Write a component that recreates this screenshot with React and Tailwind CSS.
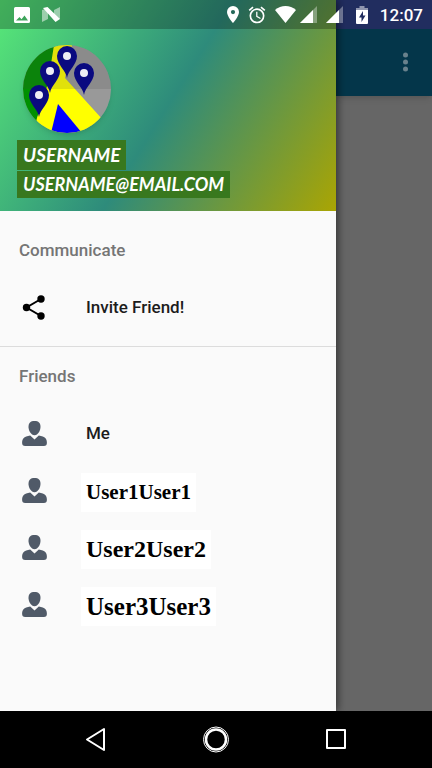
import React from 'react';

const friends = [
    { name: 'User1User1', size: 'text-[21px]' },
    { name: 'User2User2', size: 'text-[24px]' },
    { name: 'User3User3', size: 'text-[25px]' },
];

const pins = [
    { x: 44, y: 11 },
    { x: 27, y: 26 },
    { x: 61, y: 28 },
    { x: 16, y: 50 },
];

const PersonIcon = () => (
    <svg className="size-[25px] shrink-0" viewBox="0 0 25 25" fill="#505a68" aria-hidden="true">
        <path d="M12.500 0c4 0 6 2 6 5.800 0 4-2.600 8.400-6 8.400s-6-4.400-6-8.400C6.500 2 8.500 0 12.500 0z" />
        <path d="M8.200 14.500l4.300 4 4.300-4c3 .4 5.400 1.300 6.700 2.800 1 1.200 1.400 2.700 1.400 4.400 0 2.200-1 3.200-3 3.200H3.100c-2 0-3-1-3-3.200 0-1.700.4-3.200 1.400-4.400 1.300-1.500 3.700-2.400 6.700-2.800z" />
    </svg>
);

const ShareIcon = () => (
    <svg className="size-[25px] shrink-0" viewBox="0 0 25 25" aria-hidden="true">
        <path d="M19 4L4.500 12.500 19 21" fill="none" stroke="#000" strokeWidth="2" />
        <circle cx="19" cy="4" r="3.700" />
        <circle cx="4.500" cy="12.500" r="3.700" />
        <circle cx="19" cy="21" r="3.700" />
    </svg>
);

const Avatar = () => (
    <svg className="size-[88px] rounded-full shadow-md" viewBox="0 0 88 88" role="img" aria-label="Profile">
        <rect width="88" height="88" fill="#999999" />
        <path d="M0 0H32L25 40L14 74V88H0z" fill="#009000" />
        <path d="M31 0H49L42 33L80 75L70 88H10L14 73L25 38z" fill="#ffff00" />
        <path d="M35 59L28 88H59z" fill="#0000ff" />
        <rect width="88" height="44" fill="#444444" fillOpacity="0.160" />
        {pins.map((pin) => (
            <g key={pin.x} transform={`translate(${pin.x} ${pin.y})`}>
                <path d="M0 22C-1 14-10 9-10 0a10 10 0 0 1 20 0C10 9 1 14 0 22z" fill="#0a0a80" />
                <circle r="4" fill="#ededf5" />
            </g>
        ))}
    </svg>
);

const SignalIcon = () => (
    <svg className="h-[17px] w-[18px]" viewBox="0 0 18 17" fill="#fff" aria-hidden="true">
        <path d="M17 0v17H0z" fillOpacity="0.350" />
        <path d="M13 4v13H0z" />
    </svg>
);

const StatusBar = () => (
    <div className="absolute inset-x-0 top-0 z-20 flex h-[29px] items-center justify-between bg-black/25 pr-[9px] pl-[14px] text-white">
        <div className="flex items-center gap-3">
            <svg className="size-4" viewBox="0 0 16 16" fill="#fff" aria-hidden="true">
                <path fillRule="evenodd" d="M1.500 0h13A1.500 1.500 0 0 1 16 1.500v13a1.500 1.500 0 0 1-1.500 1.500h-13A1.500 1.500 0 0 1 0 14.500v-13A1.500 1.500 0 0 1 1.500 0zM2 13.500h12l-3.500-5-3 3.800-2-2.300z" />
            </svg>
            <svg className="h-[15px] w-[18px]" viewBox="0 0 18 15" fill="#fff" aria-hidden="true">
                <path d="M0 3l6-2v11l-6 3zM18 0v12l-6 1V3z" fillOpacity="0.500" />
                <path d="M1 1l4.500-1L18 12l-4.500 3z" />
            </svg>
        </div>
        <div className="flex items-center">
            <svg className="h-[17px] w-3" viewBox="0 0 12 17" fill="#fff" aria-hidden="true">
                <path fillRule="evenodd" d="M6 0a6 6 0 0 1 6 6c0 4.500-6 11-6 11S0 10.500 0 6a6 6 0 0 1 6-6zm0 4a2.100 2.100 0 1 0 0 4.200A2.100 2.100 0 0 0 6 4z" />
            </svg>
            <svg className="ml-2 size-5" viewBox="0 0 24 24" fill="#fff" aria-hidden="true">
                <path d="M22 5.720l-4.600-3.860-1.290 1.530 4.600 3.860L22 5.720zM7.880 3.390L6.600 1.860 2 5.710l1.290 1.530 4.590-3.850zM12.500 8H11v6l4.750 2.850.75-1.230-4-2.370V8zM12 4a9 9 0 1 0 0 18 9 9 0 0 0 0-18zm0 16a7 7 0 1 1 0-14 7 7 0 0 1 0 14z" />
            </svg>
            <svg className="ml-2 h-[17px] w-[21px]" viewBox="0 0 21 17" fill="#fff" aria-hidden="true">
                <path d="M0 4C6-1.300 15-1.300 21 4L10.500 17z" />
            </svg>
            <div className="ml-1 flex gap-2">
                <SignalIcon />
                <SignalIcon />
            </div>
            <svg className="ml-3 h-[18px] w-3" viewBox="0 0 12 18" fill="#fff" aria-hidden="true">
                <path d="M3.500 0h5v2H12v3H0V2h3.500z" fillOpacity="0.500" />
                <path fillRule="evenodd" d="M0 4h12v13a1 1 0 0 1-1 1H1a1 1 0 0 1-1-1zm7 1l-4 6.500h2.500V16l4-6.500H7z" />
            </svg>
            <span className="ml-3 text-[17px] leading-5 font-medium">12:07</span>
        </div>
    </div>
);

const Drawer = () => (
    <aside className="z-10 flex w-7/9 flex-col bg-[#fafafa] shadow-[2px_0_8px_rgba(0,0,0,0.500)]">
        <header className="flex h-[211px] flex-col items-start bg-[linear-gradient(122deg,#58ea78,#2e8b7b_50%,#aaa503)] pt-[45px] pl-[17px] font-['Lato',sans-serif] font-bold text-white italic">
            <div className="pl-[6px]">
                <Avatar />
            </div>
            <p className="mt-[7px] bg-[#38781e] px-[6px] text-[19px] leading-[30px]">USERNAME</p>
            <p className="mt-px bg-[#38781e] px-[6px] text-[18px] leading-[27px]">USERNAME@EMAIL.COM</p>
        </header>

        <nav className="flex-1 text-[17px] font-medium text-[#1c1c1c]">
            {/* Communicate */}
            <section className="border-b border-[#dcdcdc] py-[10px]">
                <h2 className="flex h-[58px] items-center px-[19px] pt-[2px] text-[#757575]">Communicate</h2>
                <a href="#invite" className="flex h-[57px] items-center gap-[39px] px-[22px]">
                    <ShareIcon />
                    Invite Friend!
                </a>
            </section>

            {/* Friends */}
            <section>
                <h2 className="flex h-[58px] items-center px-[19px] pt-[2px] text-[#757575]">Friends</h2>
                <a href="#me" className="flex h-[57px] items-center gap-[39px] px-[22px]">
                    <PersonIcon />
                    Me
                </a>
                {friends.map((friend) => (
                    <a key={friend.name} href={`#${friend.name}`} className="flex h-[57px] items-center gap-[34px] px-[22px]">
                        <PersonIcon />
                        <span className="pt-1">
                            <span className={`block bg-white px-[5px] font-['Liberation_Serif',serif] leading-[39px] font-bold text-black ${friend.size}`}>
                                {friend.name}
                            </span>
                        </span>
                    </a>
                ))}
            </section>
        </nav>
    </aside>
);

const NavigationBar = () => (
    <div className="z-20 flex h-[57px] items-center justify-center gap-[92px] bg-black">
        <button aria-label="Back">
            <svg className="size-7" viewBox="0 0 28 28" fill="none" stroke="#fff" strokeWidth="2" strokeLinejoin="round">
                <path d="M22 3v21L5 13.500z" />
            </svg>
        </button>
        <button aria-label="Home">
            <svg className="size-7" viewBox="0 0 28 28" fill="none" stroke="#fff">
                <circle cx="14" cy="13.500" r="12.500" />
                <circle cx="14" cy="13.500" r="10" strokeWidth="2.500" />
            </svg>
        </button>
        <button aria-label="Recent apps">
            <svg className="size-7" viewBox="0 0 28 28" fill="none" stroke="#fff" strokeWidth="2" strokeLinejoin="round">
                <rect x="5" y="4" width="18" height="18" />
            </svg>
        </button>
    </div>
);

const App = () => {
    return (
        <div className="relative flex min-h-screen flex-col bg-[#666666] font-['Roboto',sans-serif]">
            <StatusBar />
            <div className="flex flex-1">
                <Drawer />
                <main className="flex-1">
                    <div className="flex h-24 flex-col items-end border-t-[29px] border-[#2c3c7f] bg-[#04364a] pt-[20px] pr-[14px] shadow-md">
                        <button aria-label="More options">
                            <svg className="size-[26px]" viewBox="0 0 26 26" fill="#69818c">
                                <circle cx="13.500" cy="6" r="2.500" />
                                <circle cx="13.500" cy="13" r="2.500" />
                                <circle cx="13.500" cy="20" r="2.500" />
                            </svg>
                        </button>
                    </div>
                </main>
            </div>
            <NavigationBar />
        </div>
    );
};

export default App;
